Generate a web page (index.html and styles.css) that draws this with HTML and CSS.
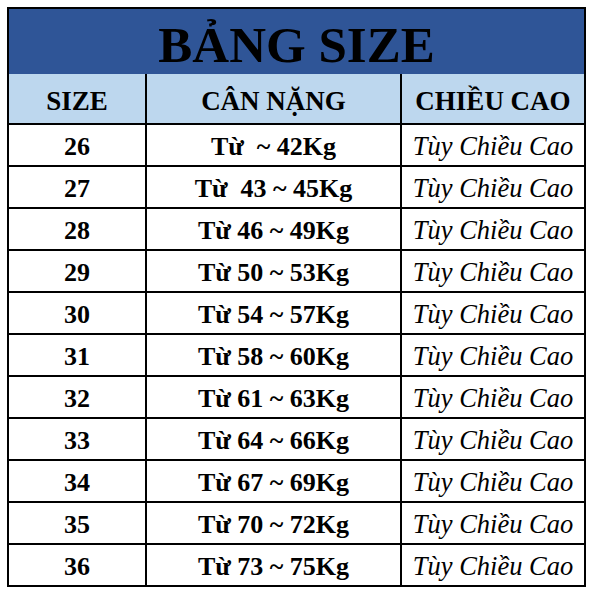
FILE: index.html
```html
<!DOCTYPE html>
<html lang="vi">
<head>
<meta charset="utf-8">
<title>Bảng size</title>
<link rel="stylesheet" href="styles.css">
</head>
<body>
<div class="sheet">
  <div class="title">BẢNG SIZE</div>
  <div class="row head">
    <div class="cell c1">SIZE</div>
    <div class="cell c2">CÂN NẶNG</div>
    <div class="cell c3">CHIỀU CAO</div>
  </div>
  <div class="row"><div class="cell c1">26</div><div class="cell c2">Từ&nbsp; ~ 42Kg</div><div class="cell c3 it">Tùy Chiều Cao</div></div>
  <div class="row"><div class="cell c1">27</div><div class="cell c2">Từ&nbsp; 43 ~ 45Kg</div><div class="cell c3 it">Tùy Chiều Cao</div></div>
  <div class="row"><div class="cell c1">28</div><div class="cell c2">Từ 46 ~ 49Kg</div><div class="cell c3 it">Tùy Chiều Cao</div></div>
  <div class="row"><div class="cell c1">29</div><div class="cell c2">Từ 50 ~ 53Kg</div><div class="cell c3 it">Tùy Chiều Cao</div></div>
  <div class="row"><div class="cell c1">30</div><div class="cell c2">Từ 54 ~ 57Kg</div><div class="cell c3 it">Tùy Chiều Cao</div></div>
  <div class="row"><div class="cell c1">31</div><div class="cell c2">Từ 58 ~ 60Kg</div><div class="cell c3 it">Tùy Chiều Cao</div></div>
  <div class="row"><div class="cell c1">32</div><div class="cell c2">Từ 61 ~ 63Kg</div><div class="cell c3 it">Tùy Chiều Cao</div></div>
  <div class="row"><div class="cell c1">33</div><div class="cell c2">Từ 64 ~ 66Kg</div><div class="cell c3 it">Tùy Chiều Cao</div></div>
  <div class="row"><div class="cell c1">34</div><div class="cell c2">Từ 67 ~ 69Kg</div><div class="cell c3 it">Tùy Chiều Cao</div></div>
  <div class="row"><div class="cell c1">35</div><div class="cell c2">Từ 70 ~ 72Kg</div><div class="cell c3 it">Tùy Chiều Cao</div></div>
  <div class="row"><div class="cell c1">36</div><div class="cell c2">Từ 73 ~ 75Kg</div><div class="cell c3 it">Tùy Chiều Cao</div></div>
</div>
</body>
</html>
```
FILE: styles.css
```css
html, body {
  margin: 0;
  padding: 0;
  background: #ffffff;
}
body {
  font-family: "Liberation Serif", "Times New Roman", serif;
  color: #000;
}
.sheet {
  margin: 7px 0 0 7px;
  width: 579px;
  box-sizing: border-box;
  border: 2px solid #000;
  background: #fff;
}
.title {
  height: 65px;
  background: #2f5597;
  font-size: 51px;
  font-weight: bold;
  text-align: center;
  line-height: 65px;
  padding-top: 4px;
  box-sizing: border-box;
}
.row {
  display: flex;
  height: 42px;
  border-top: 2px solid #000;
  box-sizing: border-box;
}
.row.head {
  height: 49px;
  border-top: none;
  background: #bdd7ee;
}
.cell {
  display: flex;
  align-items: center;
  justify-content: center;
  box-sizing: border-box;
  padding-top: 3px;
  font-size: 26px;
  font-weight: bold;
  white-space: pre;
}
.head .cell {
  font-size: 27px;
  padding-top: 5px;
}
.c1 { width: 136px; }
.c2 { width: 255px; border-left: 2px solid #000; }
.c3 { width: 184px; border-left: 2px solid #000; }
.it {
  font-weight: normal;
  font-style: italic;
  font-size: 26.5px;
}
```
